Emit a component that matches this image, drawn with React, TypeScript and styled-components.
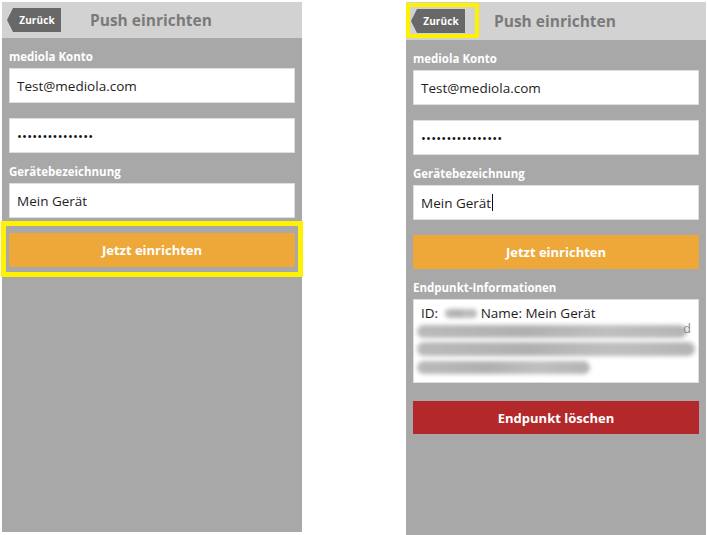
import React from "react";
import styled, { createGlobalStyle, css } from "styled-components";

const GlobalStyle = createGlobalStyle`
  html, body {
    margin: 0;
    padding: 0;
    background: #ffffff;
  }
  body {
    font-family: "Open Sans", "Noto Sans", "Liberation Sans", sans-serif;
  }
`;

const Page = styled.div`
  display: flex;
  align-items: flex-start;
  gap: 104px;
  padding: 2px 0 0 2px;
  width: 707px;
  height: 535px;
  box-sizing: border-box;
  overflow: hidden;
`;

const Phone = styled.div<{ $height: number }>`
  width: 300px;
  height: ${(p) => p.$height}px;
  background: #a8a8a8;
  display: flex;
  flex-direction: column;
  flex-shrink: 0;
`;

const Header = styled.div<{ $height: number }>`
  height: ${(p) => p.$height}px;
  background: #d2d2d2;
  display: flex;
  align-items: center;
  padding-left: 5px;
  flex-shrink: 0;
`;

// yellow annotation frame drawn over a control
const Highlight = styled.div<{
  $inset: [number, number, number, number];
  $thickness: number;
  $gap?: number;
}>`
  position: relative;
  display: flex;
  margin-top: ${(p) => p.$gap ?? 0}px;

  &::after {
    content: "";
    position: absolute;
    top: ${(p) => -p.$inset[0]}px;
    right: ${(p) => -p.$inset[1]}px;
    bottom: ${(p) => -p.$inset[2]}px;
    left: ${(p) => -p.$inset[3]}px;
    border: ${(p) => p.$thickness}px solid #fff200;
    pointer-events: none;
  }
`;

const BackButton = styled.button`
  width: 54px;
  height: 24px;
  border: none;
  margin: 0;
  padding: 0 0 0 6px;
  background: #686868;
  color: #ffffff;
  font-family: inherit;
  font-size: 10px;
  font-weight: 700;
  letter-spacing: 0.1px;
  clip-path: polygon(6px 0, 100% 0, 100% 100%, 6px 100%, 0 50%);
  display: flex;
  align-items: center;
  justify-content: center;
`;

const Title = styled.h1`
  margin: 0 0 0 29px;
  font-size: 15.5px;
  font-weight: 700;
  color: #7a7a7a;
  line-height: 20px;
`;

const Content = styled.div`
  display: flex;
  flex-direction: column;
  padding: 0 7px;
`;

const FieldLabel = styled.div`
  padding: 11px 0 3px;
  font-size: 11.5px;
  line-height: 16px;
  font-weight: 700;
  color: #ffffff;
`;

const boxBase = css`
  background: #ffffff;
  border: 1px solid #dedede;
  box-sizing: border-box;
  color: #1e1e1e;
  font-size: 13.5px;
`;

const TextBox = styled.div<{ $gap?: number }>`
  ${boxBase};
  height: 35px;
  margin-top: ${(p) => p.$gap ?? 0}px;
  padding-left: 7px;
  display: flex;
  align-items: center;
`;

const Dots = styled.span`
  font-size: 13px;
  letter-spacing: 0.2px;
  color: #111;
`;

const Caret = styled.span`
  display: inline-block;
  width: 1px;
  height: 17px;
  background: #111;
  margin-left: 1px;
`;

const ActionButton = styled.button<{ $tone: "orange" | "red"; $gap?: number; $height: number }>`
  width: 100%;
  height: ${(p) => p.$height}px;
  margin: ${(p) => p.$gap ?? 0}px 0 0;
  border: none;
  padding: 0;
  background: ${(p) => (p.$tone === "orange" ? "#eea83a" : "#b3282a")};
  color: #ffffff;
  font-family: inherit;
  font-size: 13px;
  font-weight: 700;
  display: flex;
  align-items: center;
  justify-content: center;
`;

const InfoBox = styled.div`
  ${boxBase};
  height: 84px;
  padding: 4px 3px 0 7px;
  display: flex;
  flex-direction: column;
`;

const InfoLine = styled.div<{ $indent?: number }>`
  height: 18px;
  display: flex;
  align-items: center;
  margin-left: ${(p) => p.$indent ?? 0}px;
  position: relative;
`;

const Redaction = styled.span<{ $width: number; $height?: number }>`
  display: inline-block;
  width: ${(p) => p.$width}px;
  height: ${(p) => p.$height ?? 13}px;
  background: linear-gradient(90deg, #bababa, #b0b0b0 40%, #bfbfbf 70%, #b4b4b4);
  border-radius: 7px;
  filter: blur(2.2px);
`;

const Faded = styled.span`
  position: absolute;
  right: 4px;
  top: -3px;
  color: #8a8a8a;
  font-size: 13px;
`;

const PasswordField = ({ count, gap }: { count: number; gap: number }) => (
  <TextBox $gap={gap}>
    <Dots>{"•".repeat(count)}</Dots>
  </TextBox>
);

const App = () => {
  return (
    <>
      <GlobalStyle />
      <Page>
        <Phone $height={530}>
          <Header $height={36}>
            <BackButton>Zurück</BackButton>
            <Title>Push einrichten</Title>
          </Header>
          <Content>
            <FieldLabel>mediola Konto</FieldLabel>
            <TextBox>Test@mediola.com</TextBox>
            <PasswordField count={15} gap={15} />
            <FieldLabel>Gerätebezeichnung</FieldLabel>
            <TextBox>Mein Gerät</TextBox>
            <Highlight $inset={[12, 8, 10, 8]} $thickness={5} $gap={15}>
              <ActionButton $tone="orange" $height={34}>
                Jetzt einrichten
              </ActionButton>
            </Highlight>
          </Content>
        </Phone>

        <Phone $height={533}>
          <Header $height={38}>
            <Highlight $inset={[6, 14, 5, 5]} $thickness={4}>
              <BackButton>Zurück</BackButton>
            </Highlight>
            <Title>Push einrichten</Title>
          </Header>
          <Content>
            <FieldLabel>mediola Konto</FieldLabel>
            <TextBox>Test@mediola.com</TextBox>
            <PasswordField count={16} gap={15} />
            <FieldLabel>Gerätebezeichnung</FieldLabel>
            <TextBox>
              Mein Gerät
              <Caret />
            </TextBox>
            <ActionButton $tone="orange" $gap={15} $height={34}>
              Jetzt einrichten
            </ActionButton>
            <FieldLabel>Endpunkt-Informationen</FieldLabel>
            <InfoBox>
              <InfoLine>
                ID:&nbsp;&nbsp;
                <Redaction $width={32} $height={9} />
                &nbsp;Name: Mein Gerät
              </InfoLine>
              <InfoLine $indent={-4}>
                <Redaction $width={270} />
                <Faded>d</Faded>
              </InfoLine>
              <InfoLine $indent={-4}>
                <Redaction $width={281} $height={14} />
              </InfoLine>
              <InfoLine $indent={-4}>
                <Redaction $width={173} />
              </InfoLine>
            </InfoBox>
            <ActionButton $tone="red" $gap={18} $height={33}>
              Endpunkt löschen
            </ActionButton>
          </Content>
        </Phone>
      </Page>
    </>
  );
};

export default App;
